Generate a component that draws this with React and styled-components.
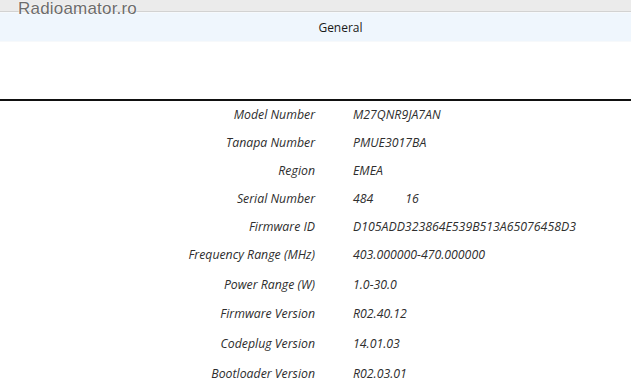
import React from 'react';
import styled, { createGlobalStyle } from 'styled-components';

const GlobalStyle = createGlobalStyle`
  html, body {
    margin: 0;
    padding: 0;
    background: #ffffff;
  }
  body {
    width: 631px;
    height: 388px;
    overflow: hidden;
    font-family: "Open Sans", "Noto Sans", sans-serif;
  }
`;

const Page = styled.div`
  position: relative;
  width: 631px;
  height: 388px;
  background: #ffffff;
`;

const Watermark = styled.div`
  position: absolute;
  left: 18px;
  top: -1px;
  font-family: "Liberation Sans", Arial, sans-serif;
  font-size: 17px;
  color: #6c6c6c;
  letter-spacing: 0.2px;
  text-shadow: 0 0 2px #ffffff, 0 0 1px #ffffff;
`;

const TopStrip = styled.div`
  height: 11px;
  background: #ebebeb;
  border-bottom: 1px solid #d2d2d2;
`;

const TabHeader = styled.div`
  height: 28px;
  background: #eff6fd;
  border-top: 1px solid #f6f9fc;
  border-bottom: 1px solid #f7f9fb;
  display: flex;
  align-items: center;
  justify-content: center;
  padding-left: 50px;
  font-size: 12px;
  color: #1a1a1a;
`;

const Spacer = styled.div`
  height: 57px;
`;

const Divider = styled.div`
  height: 2px;
  background: #111111;
`;

const Table = styled.div`
  display: flex;
  flex-direction: column;
  margin-top: -1px;
`;

const Row = styled.div`
  display: grid;
  grid-template-columns: 315px 1fr;
  column-gap: 38px;
  align-items: center;
  height: ${p => (p.$tall ? '29.6px' : '28px')};
  font-size: 12.3px;
  font-style: italic;
  color: #2e2e2e;
`;

const Label = styled.div`
  text-align: right;
  white-space: nowrap;
`;

const Value = styled.div`
  white-space: pre;
`;

const rows = [
  ['Model Number', 'M27QNR9JA7AN'],
  ['Tanapa Number', 'PMUE3017BA'],
  ['Region', 'EMEA'],
  ['Serial Number', '484          16'],
  ['Firmware ID', 'D105ADD323864E539B513A65076458D3'],
  ['Frequency Range (MHz)', '403.000000-470.000000', true],
  ['Power Range (W)', '1.0-30.0', true],
  ['Firmware Version', 'R02.40.12', true],
  ['Codeplug Version', '14.01.03', true],
  ['Bootloader Version', 'R02.03.01', true],
];

export default function App() {
  return (
    <Page>
      <GlobalStyle />
      <TopStrip />
      <TabHeader>General</TabHeader>
      <Spacer />
      <Divider />
      <Table>
        {rows.map(([label, value, tall]) => (
          <Row key={label} $tall={tall}>
            <Label>{label}</Label>
            <Value>{value}</Value>
          </Row>
        ))}
      </Table>
      <Watermark>Radioamator.ro</Watermark>
    </Page>
  );
}
